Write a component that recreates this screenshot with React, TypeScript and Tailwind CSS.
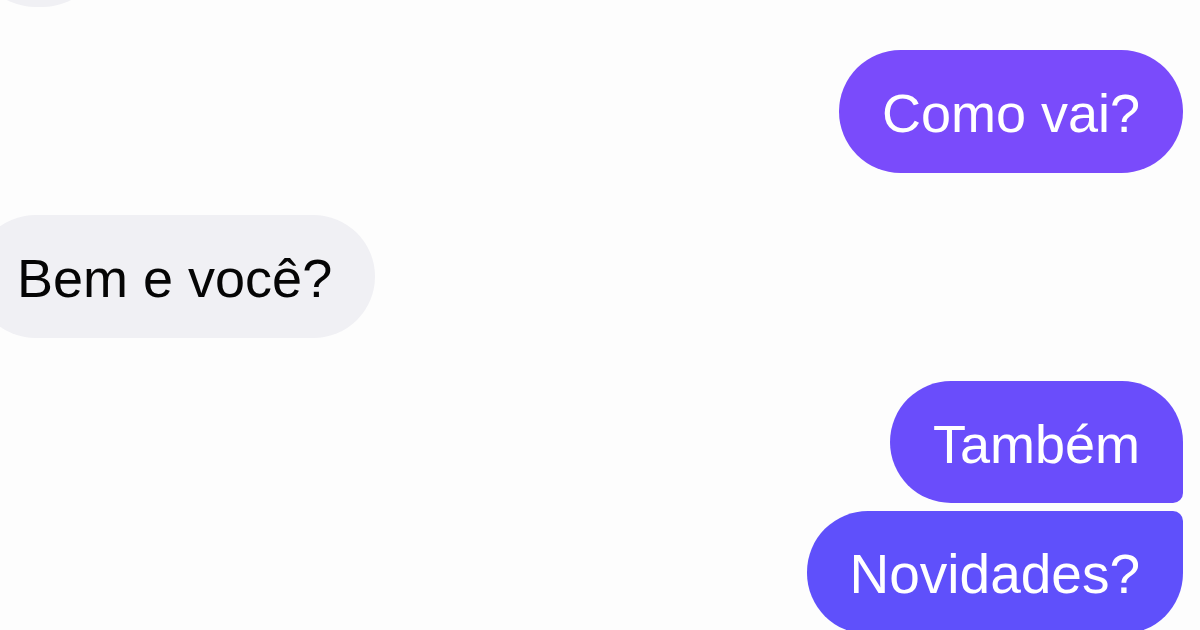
export default function App() {
  return (
    <div
      className="w-[1200px] h-[630px] overflow-hidden bg-[#fdfdfd] flex flex-col pr-[17px]"
      style={{ fontFamily: '"Liberation Sans", Arial, sans-serif' }}
    >
      {/* previous message, cut off at the top */}
      <div className="-mt-[116px] -ml-[26px] w-[130px] h-[123px] shrink-0 rounded-full bg-[#f0f0f4]" />

      <div className="mt-[43px] self-end h-[123px] shrink-0 flex items-center pt-[4px] px-[43px] rounded-full bg-[#7a4bfb] text-white text-[54px]">
        Como vai?
      </div>

      <div className="mt-[42px] -ml-[26px] self-start h-[123px] shrink-0 flex items-center pt-[4px] px-[43px] rounded-full bg-[#f0f0f4] text-[#050505] text-[54px]">
        Bem e você?
      </div>

      <div className="mt-[43px] self-end h-[122px] shrink-0 flex items-center pt-[4px] px-[43px] rounded-[61px] rounded-br-[10px] bg-[#6a4dfb] text-white text-[54px]">
        Também
      </div>

      <div className="mt-[8px] self-end h-[123px] shrink-0 flex items-center pt-[4px] px-[43px] rounded-[61px] rounded-tr-[10px] bg-[#5f50fb] text-white text-[55px]">
        Novidades?
      </div>
    </div>
  );
}
